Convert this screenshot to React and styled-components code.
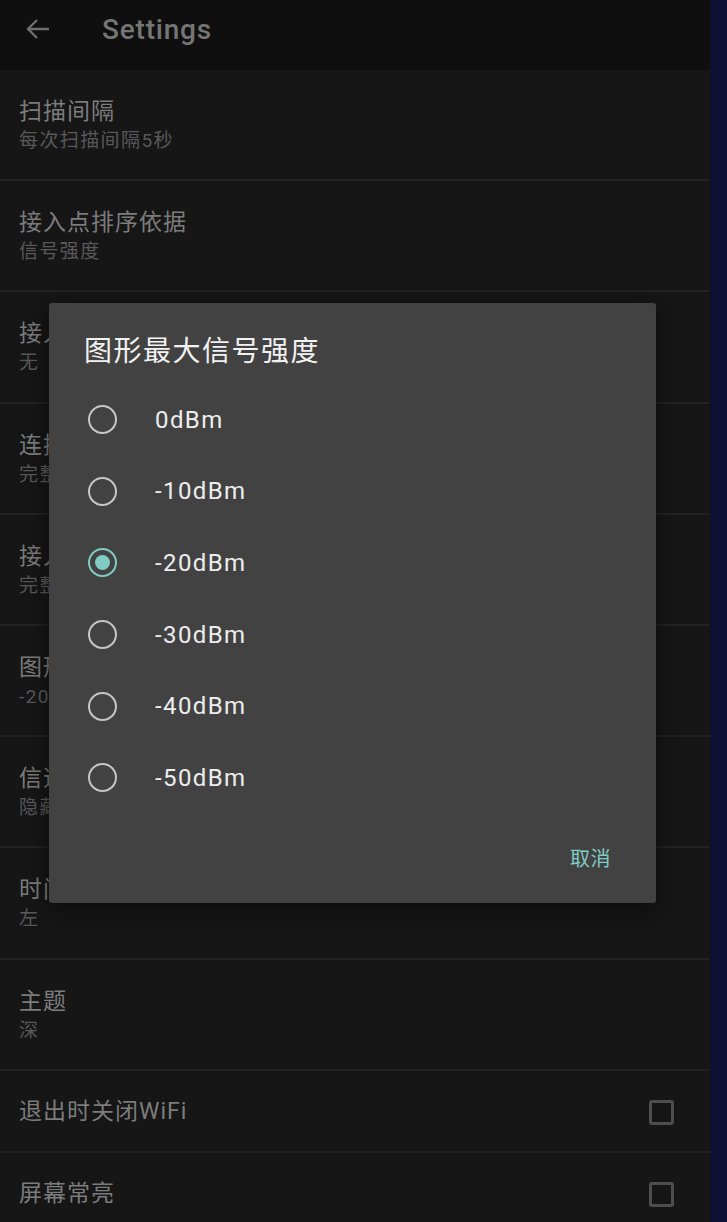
import React from "react"
import styled, { createGlobalStyle } from "styled-components"

const GlobalStyle = createGlobalStyle`
  html, body {
    margin: 0;
    padding: 0;
    background: #0d1033;
    font-family: Roboto, "Noto Sans CJK SC", sans-serif;
  }
  * { box-sizing: border-box; }
`

const colors = {
  header: "#0f0f0f",
  body: "#161616",
  divider: "#222222",
  title: "#7c7c7c",
  summary: "#595959",
  dialog: "#424242",
  accent: "#80cbc4",
}

// Page
const Screen = styled.div`
  position: relative;
  width: 710px;
  height: 1222px;
  overflow: hidden;
  background-color: ${colors.body};
`

const Toolbar = styled.header`
  height: 70px;
  display: flex;
  align-items: center;
  padding: 0 0 12px 25px;
  background-color: ${colors.header};
`

const BackButton = styled.div`
  width: 26px;
  height: 22px;
  display: flex;
  align-items: center;
  color: #6e6e6e;
`

const ToolbarTitle = styled.h1`
  margin: 0 0 0 51px;
  font-size: 28px;
  font-weight: 500;
  color: #757575;
  letter-spacing: 0.8px;
`

const PrefList = styled.div`
  display: flex;
  flex-direction: column;
`

const PrefRow = styled.div`
  height: ${props => (props.compact ? "82px" : "111.2px")};
  display: flex;
  align-items: center;
  justify-content: space-between;
  padding: ${props => (props.compact ? "3px 34px 0 19px" : "2px 34px 0 19px")};
  border-bottom: 2px solid ${colors.divider};
`

const PrefText = styled.div`
  display: flex;
  flex-direction: column;
  gap: 3px;
`

const PrefTitle = styled.div`
  font-size: 23px;
  line-height: 28px;
  letter-spacing: 1px;
  color: ${colors.title};
`

const PrefSummary = styled.div`
  font-size: 19px;
  line-height: 24px;
  letter-spacing: 1.4px;
  color: ${colors.summary};
`

const CheckBox = styled.div`
  width: 25px;
  height: 25px;
  margin-right: 2px;
  border: 3px solid #4e4e4e;
  border-radius: 3px;
`

// Dialog
const Dialog = styled.div`
  position: absolute;
  left: 49px;
  top: 303px;
  width: 607px;
  height: 600px;
  background-color: ${colors.dialog};
  border-radius: 3px;
  box-shadow: 0 6px 24px rgba(0, 0, 0, 0.5);
  display: flex;
  flex-direction: column;
`

const DialogTitle = styled.h2`
  margin: 0;
  padding: 33px 0 0 35px;
  font-size: 28px;
  line-height: 32px;
  letter-spacing: 1.5px;
  font-weight: 400;
  color: #f2f2f2;
`

const OptionList = styled.div`
  margin-top: 16px;
  display: flex;
  flex-direction: column;
`

const Option = styled.div`
  height: 71.6px;
  display: flex;
  align-items: center;
  padding-left: 39px;
`

const Radio = styled.span`
  width: 29px;
  height: 29px;
  border-radius: 50%;
  border: 2.5px solid ${props => (props.checked ? colors.accent : "#c6c6c6")};
  display: flex;
  align-items: center;
  justify-content: center;
  flex-shrink: 0;
  &:after {
    content: "";
    width: 15px;
    height: 15px;
    border-radius: 50%;
    background-color: ${colors.accent};
    display: ${props => (props.checked ? "block" : "none")};
  }
`

const OptionLabel = styled.span`
  margin-left: 38px;
  font-size: 24px;
  letter-spacing: 1.4px;
  color: #ededed;
`

const DialogActions = styled.div`
  margin-top: auto;
  display: flex;
  justify-content: flex-end;
  padding: 0 45px 30px 0;
`

const TextButton = styled.span`
  font-size: 20px;
  line-height: 28px;
  letter-spacing: 0.5px;
  color: ${colors.accent};
`

const prefs = [
  { title: "扫描间隔", summary: "每次扫描间隔5秒" },
  { title: "接入点排序依据", summary: "信号强度" },
  { title: "接入点过滤", summary: "无" },
  { title: "连接信息显示", summary: "完整" },
  { title: "接入点信息显示", summary: "完整" },
  { title: "图形最大信号强度", summary: "-20dBm" },
  { title: "信道图显示", summary: "隐藏" },
  { title: "时间图图例位置", summary: "左" },
  { title: "主题", summary: "深" },
]

const toggles = ["退出时关闭WiFi", "屏幕常亮"]

const options = ["0dBm", "-10dBm", "-20dBm", "-30dBm", "-40dBm", "-50dBm"]

const App = () => {
  return (
    <>
      <GlobalStyle />
      <Screen>
        <Toolbar>
          <BackButton>
            <svg width="26" height="22" viewBox="0 0 26 22" fill="none">
              <path
                d="M24 11H3M12 2L3 11l9 9"
                stroke="currentColor"
                strokeWidth="2.4"
              />
            </svg>
          </BackButton>
          <ToolbarTitle>Settings</ToolbarTitle>
        </Toolbar>
        <PrefList>
          {prefs.map(p => (
            <PrefRow key={p.title}>
              <PrefText>
                <PrefTitle>{p.title}</PrefTitle>
                <PrefSummary>{p.summary}</PrefSummary>
              </PrefText>
            </PrefRow>
          ))}
          {toggles.map(t => (
            <PrefRow compact key={t}>
              <PrefTitle>{t}</PrefTitle>
              <CheckBox />
            </PrefRow>
          ))}
        </PrefList>

        <Dialog>
          <DialogTitle>图形最大信号强度</DialogTitle>
          <OptionList>
            {options.map(o => (
              <Option key={o}>
                <Radio checked={o === "-20dBm"} />
                <OptionLabel>{o}</OptionLabel>
              </Option>
            ))}
          </OptionList>
          <DialogActions>
            <TextButton>取消</TextButton>
          </DialogActions>
        </Dialog>
      </Screen>
    </>
  )
}

export default App
